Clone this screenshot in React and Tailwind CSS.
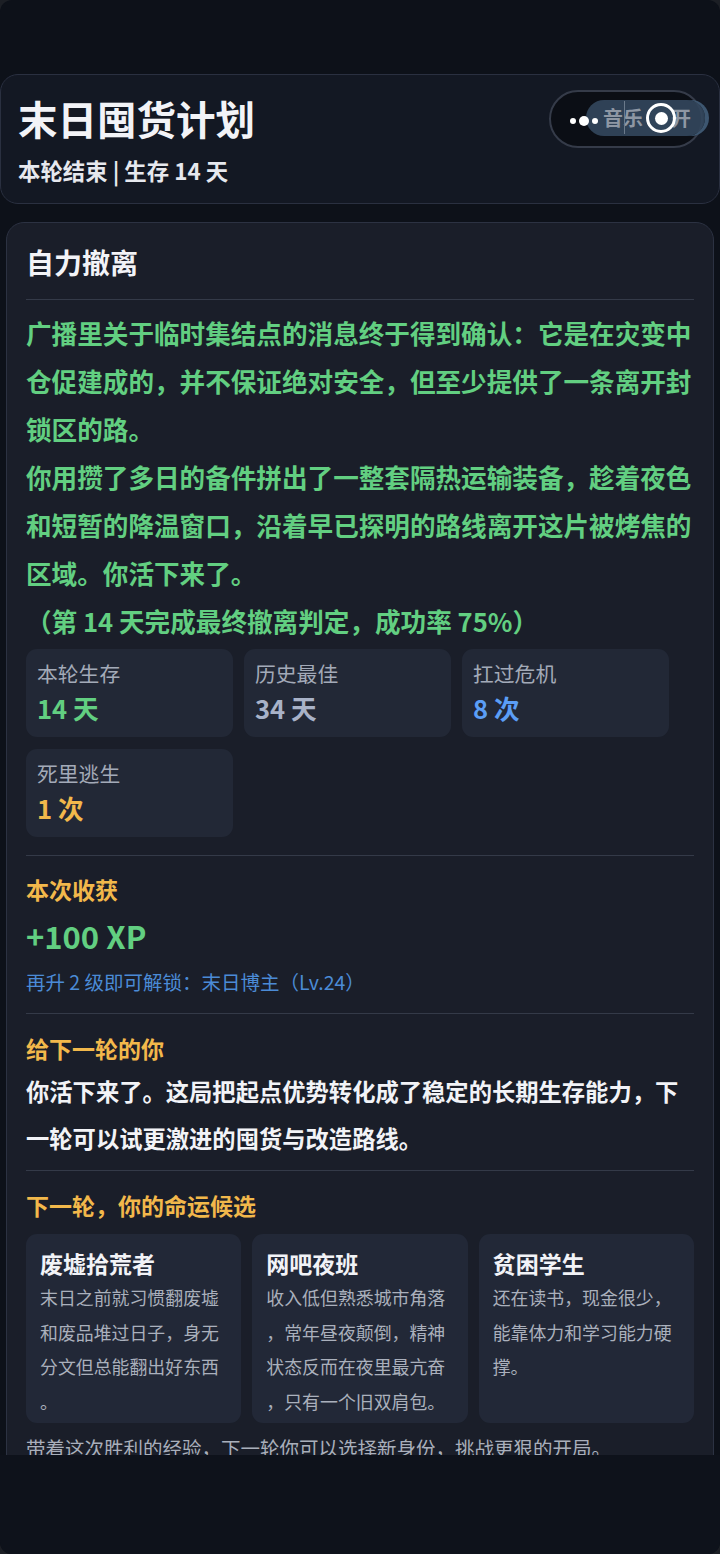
import React from "react";

const stats = [
  {label: "本轮生存", value: "14 天", color: "text-[#62cf81]"},
  {label: "历史最佳", value: "34 天", color: "text-[#a8b2c8]"},
  {label: "扛过危机", value: "8 次", color: "text-[#5b9ef6]"},
  {label: "死里逃生", value: "1 次", color: "text-[#f2b84b]"},
];

const fates = [
  {
    title: "废墟拾荒者",
    desc: "末日之前就习惯翻废墟和废品堆过日子，身无分文但总能翻出好东西。",
  },
  {
    title: "网吧夜班",
    desc: "收入低但熟悉城市角落，常年昼夜颠倒，精神状态反而在夜里最亢奋，只有一个旧双肩包。",
  },
  {
    title: "贫困学生",
    desc: "还在读书，现金很少，能靠体力和学习能力硬撑。",
  },
];

// music toggle in the header, drawn as it appears mid-animation
function MusicToggle() {
  return (
    <div className="relative mt-[15px] h-[58px] w-[154px] shrink-0 self-start rounded-full border-2 border-[#353b49] bg-[#0b0e15]">
      <div className="absolute left-[35px] top-[8px] flex h-[36px] w-[119px] items-center whitespace-nowrap rounded-full bg-[#33475d]/90 pl-[17px] shadow-[4px_0_0_#3d5670]">
        <span className="text-[20px] font-bold leading-none text-[#8e97a4]">音乐</span>
      </div>
      <span className="absolute left-[120px] top-[16px] text-[20px] font-bold leading-none text-[#8e97a4]">开</span>
      <span className="absolute left-[73px] top-[9px] h-[33px] w-px bg-[#6b7a8b]" />
      {/* dots */}
      <div className="absolute left-[19px] top-[24px] flex items-center gap-[3px]">
        <span className="h-[6px] w-[6px] rounded-full bg-white" />
        <span className="h-[10px] w-[10px] rounded-full bg-white" />
        <span className="h-[6px] w-[6px] rounded-full bg-white" />
      </div>
      {/* knob ring */}
      <div className="absolute left-[95px] top-[11px] flex h-[30px] w-[30px] items-center justify-center rounded-full border-[3px] border-white bg-[#33475d]/60">
        <span className="h-[13px] w-[13px] rounded-full bg-white" />
      </div>
    </div>
  );
}

export default function App() {
  return (
    <div className="min-h-screen bg-[#1c1f25]">
      <div className="flex h-[1554px] w-[720px] flex-col overflow-hidden rounded-[12px] bg-[#0d1119] font-['Noto_Sans_CJK_SC','Noto_Sans',sans-serif]">
        {/* scrolling area */}
        <div className="flex-1 overflow-hidden pt-[74px]">
          {/* header */}
          <header className="flex h-[130px] items-center justify-between rounded-[18px] border border-[#2a3040] bg-[#131823] pl-[17px] pr-[16px]">
            <div>
              <h1 className="text-[39.5px] font-bold leading-[46px] text-[#f2f3f7]">末日囤货计划</h1>
              <p className="mt-[16px] text-[22.4px] font-bold leading-[26px] text-[#e6e8ee]">
                本轮结束 | 生存 14 天
              </p>
            </div>
            <MusicToggle />
          </header>

          {/* result card */}
          <section className="mx-[6px] mt-[18px] rounded-[18px] border border-[#2c3242] bg-[#1a1e29] px-[19px] pt-[21px]">
            <h2 className="text-[28px] font-bold leading-[36px] text-[#f2f3f7]">自力撤离</h2>
            <div className="mt-[19px] border-t border-[#343a48]" />

            <div className="mt-[9px] text-[25.6px] font-bold leading-[48px] text-[#62cf81]">
              <p>广播里关于临时集结点的消息终于得到确认：它是在灾变中仓促建成的，并不保证绝对安全，但至少提供了一条离开封锁区的路。</p>
              <p>你用攒了多日的备件拼出了一整套隔热运输装备，趁着夜色和短暂的降温窗口，沿着早已探明的路线离开这片被烤焦的区域。你活下来了。</p>
              <p>（第 14 天完成最终撤离判定，成功率 75%）</p>
            </div>

            {/* stats */}
            <div className="mt-[4px] grid grid-cols-[repeat(3,207px)] gap-x-[11px] gap-y-[12px]">
              {stats.map((s) => (
                <div key={s.label} className="h-[88px] rounded-[11px] bg-[#222836] px-[11px] pt-[11px]">
                  <div className="text-[20.8px] leading-[26px] text-[#a3aab8]">{s.label}</div>
                  <div className={`mt-[6px] text-[25.6px] font-bold leading-[32px] ${s.color}`}>{s.value}</div>
                </div>
              ))}
            </div>

            <div className="mt-[18px] border-t border-[#343a48]" />

            {/* rewards */}
            <h3 className="mt-[19px] text-[23px] font-bold leading-[28px] text-[#f2b84b]">本次收获</h3>
            <div className="mt-[15px] text-[31px] font-bold leading-[36px] text-[#62cf81]">+100 XP</div>
            <p className="mt-[16px] text-[19.5px] leading-[24px] text-[#4b8bd6]">
              再升 2 级即可解锁：末日博主（Lv.24）
            </p>

            <div className="mt-[19px] border-t border-[#343a48]" />

            <h3 className="mt-[20px] text-[23px] font-bold leading-[28px] text-[#f2b84b]">给下一轮的你</h3>
            <p className="mt-[6px] text-[23.3px] font-bold leading-[47px] text-[#f2f3f7]">
              你活下来了。这局把起点优势转化成了稳定的长期生存能力，下一轮可以试更激进的囤货与改造路线。
            </p>

            <div className="mt-[8px] border-t border-[#343a48]" />

            <h3 className="mt-[20px] text-[23px] font-bold leading-[28px] text-[#f2b84b]">下一轮，你的命运候选</h3>
            <div className="mt-[15px] grid grid-cols-3 gap-[11px]">
              {fates.map((f) => (
                <div key={f.title} className="rounded-[11px] bg-[#222837] px-[14px] pb-[5px] pt-[15px]">
                  <div className="text-[23px] font-bold leading-[28px] text-[#f2f3f7]">{f.title}</div>
                  <p className="mt-[3px] text-[17.9px] leading-[34.5px] text-[#aab0bc] [line-break:anywhere]">
                    {f.desc}
                  </p>
                </div>
              ))}
            </div>
            <p className="mt-[8px] pb-[20px] text-[19.5px] leading-[34px] text-[#a9afbb]">
              带着这次胜利的经验，下一轮你可以选择新身份，挑战更狠的开局。
            </p>
          </section>
        </div>

        {/* bottom bar */}
        <div className="h-[99px] shrink-0 bg-[#0e121b]" />
      </div>
    </div>
  );
}
